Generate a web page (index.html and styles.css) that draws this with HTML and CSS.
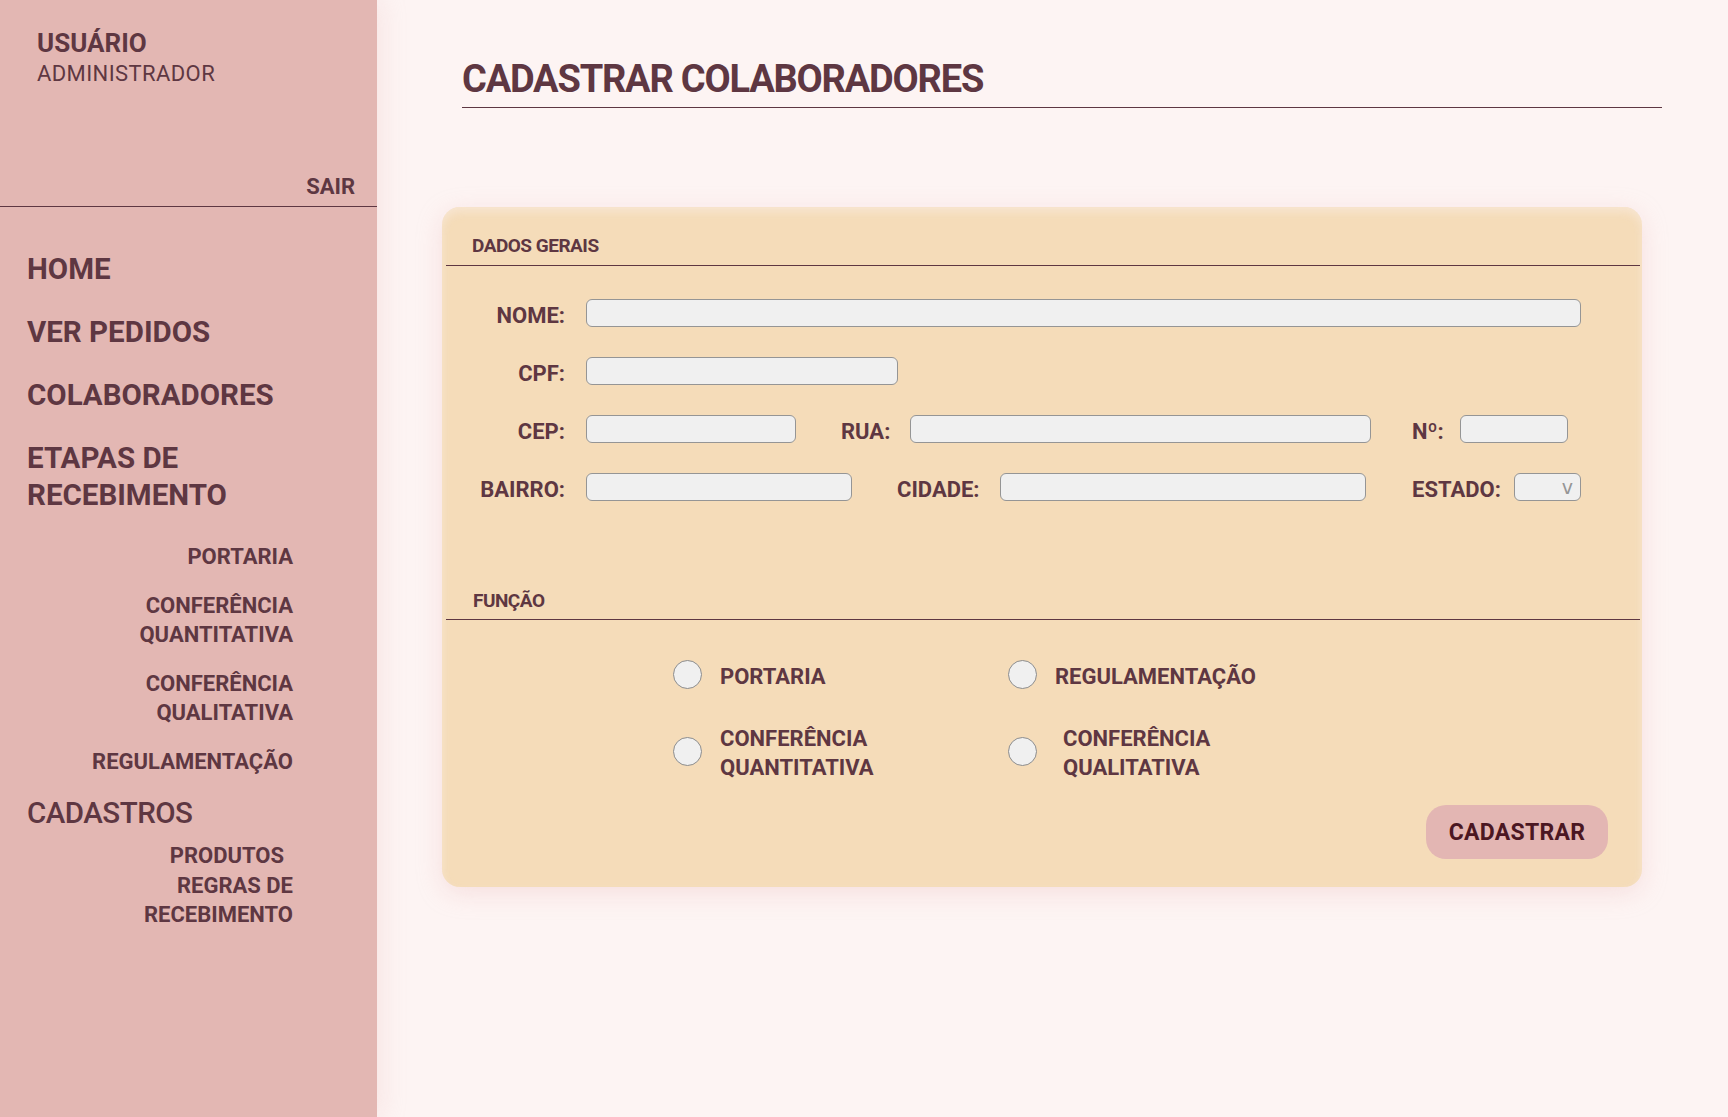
FILE: index.html
```html
<!DOCTYPE html>
<html lang="pt-BR">
<head>
<meta charset="utf-8">
<title>Cadastrar Colaboradores</title>
<link rel="stylesheet" href="styles.css">
</head>
<body>
<div class="app">
  <aside class="sidebar">
    <div class="user">
      <div class="user-name">USUÁRIO</div>
      <div class="user-role">ADMINISTRADOR</div>
      <a class="logout">SAIR</a>
    </div>
    <nav class="menu">
      <a class="menu-item">HOME</a>
      <a class="menu-item">VER PEDIDOS</a>
      <a class="menu-item">COLABORADORES</a>
      <a class="menu-item">ETAPAS DE<br>RECEBIMENTO</a>
    </nav>
    <div class="submenu">
      <a class="sub-item">PORTARIA</a>
      <a class="sub-item">CONFERÊNCIA<br>QUANTITATIVA</a>
      <a class="sub-item">CONFERÊNCIA<br>QUALITATIVA</a>
      <a class="sub-item">REGULAMENTAÇÃO</a>
    </div>
    <div class="menu-title">CADASTROS</div>
    <div class="submenu-cad">
      <a class="sub-item sub-produtos">PRODUTOS</a>
      <a class="sub-item">REGRAS DE<br>RECEBIMENTO</a>
    </div>
  </aside>

  <main class="main">
    <header class="page-head">
      <h1 class="page-title">CADASTRAR COLABORADORES</h1>
    </header>

    <section class="card">
      <div class="section-title">DADOS GERAIS</div>

      <div class="form">
        <div class="row">
          <label class="lbl">NOME:</label>
          <input class="field w-nome" type="text">
        </div>
        <div class="row">
          <label class="lbl">CPF:</label>
          <input class="field w-cpf" type="text">
        </div>
        <div class="row">
          <label class="lbl">CEP:</label>
          <input class="field w-cep" type="text">
          <label class="lbl-inline l-rua">RUA:</label>
          <input class="field w-rua" type="text">
          <label class="lbl-inline l-num">Nº:</label>
          <input class="field w-num" type="text">
        </div>
        <div class="row">
          <label class="lbl">BAIRRO:</label>
          <input class="field w-bairro" type="text">
          <label class="lbl-inline l-cidade">CIDADE:</label>
          <input class="field w-cidade" type="text">
          <label class="lbl-inline l-estado">ESTADO:</label>
          <div class="field select"><span class="select-arrow">v</span></div>
        </div>
      </div>

      <div class="section-title section-funcao">FUNÇÃO</div>

      <div class="radios">
        <label class="radio-opt"><input type="radio" name="funcao" class="radio"><span class="radio-text">PORTARIA</span></label>
        <label class="radio-opt"><input type="radio" name="funcao" class="radio"><span class="radio-text">REGULAMENTAÇÃO</span></label>
        <label class="radio-opt"><input type="radio" name="funcao" class="radio"><span class="radio-text">CONFERÊNCIA<br>QUANTITATIVA</span></label>
        <label class="radio-opt"><input type="radio" name="funcao" class="radio"><span class="radio-text shift">CONFERÊNCIA<br>QUALITATIVA</span></label>
      </div>

      <div class="actions">
        <button class="btn" type="button">CADASTRAR</button>
      </div>
    </section>
  </main>
</div>
</body>
</html>
```

FILE: styles.css
```css
* { box-sizing: border-box; }

html, body {
  margin: 0;
  padding: 0;
}

body {
  background: #fdf4f3;
  color: #5e3742;
  font-family: Roboto, "Liberation Sans", Arial, sans-serif;
  overflow: hidden;
}

a { color: inherit; text-decoration: none; }

.app {
  display: flex;
  min-height: 1117px;
}

/* ---------- Sidebar ---------- */
.sidebar {
  width: 377px;
  flex-shrink: 0;
  background: #e3b7b3;
  box-shadow: 6px 0 22px rgba(232, 180, 180, 0.22);
  position: relative;
  z-index: 1;
}

.user {
  padding: 27px 22px 6px 37px;
  border-bottom: 1px solid #5e3742;
}

.user-name {
  font-size: 26px;
  font-weight: 700;
  line-height: 32px;
}

.user-role {
  font-size: 22px;
  font-weight: 400;
  line-height: 30px;
  letter-spacing: 0.4px;
}

.logout {
  display: block;
  text-align: right;
  font-size: 22px;
  font-weight: 700;
  line-height: 26px;
  margin-top: 85px;
}

.menu {
  display: flex;
  flex-direction: column;
  gap: 26px;
  padding: 44px 0 0 27px;
}

.menu-item,
.menu-title {
  font-size: 29.5px;
  font-weight: 700;
  line-height: 37px;
}

.menu-title {
  font-weight: 500;
  letter-spacing: -0.5px;
  padding-left: 27px;
  margin-top: 19px;
}

.submenu,
.submenu-cad {
  display: flex;
  flex-direction: column;
  align-items: flex-end;
  text-align: right;
  padding-right: 84px;
}

.submenu {
  gap: 20px;
  margin-top: 28px;
}

.submenu-cad {
  margin-top: 9px;
}

.sub-item {
  font-size: 22px;
  font-weight: 700;
  line-height: 29px;
}

.submenu-cad .sub-item {
  line-height: 29.5px;
}

.sub-produtos {
  padding-right: 9px;
}

/* ---------- Main ---------- */
.main {
  flex: 1;
  padding: 0 66px 0 65px;
}

.page-head {
  margin-left: 20px;
  padding: 55px 0 4px;
  border-bottom: 1px solid #5e3742;
}

.page-title {
  margin: 0;
  font-family: Roboto, sans-serif;
  font-size: 38px;
  font-weight: 700;
  letter-spacing: -1.2px;
  line-height: 48px;
  color: #5e3742;
}

.card {
  margin-top: 99px;
  width: 1200px;
  background: #f5dcb9;
  border-radius: 18px;
  padding: 27px 2px 28px 4px;
  box-shadow: 0 6px 24px rgba(236, 186, 186, 0.35), inset 0 5px 8px rgba(250, 236, 228, 0.55);
}

.section-title {
  font-family: Roboto, sans-serif;
  font-size: 19px;
  font-weight: 700;
  letter-spacing: -0.5px;
  line-height: 24px;
  padding: 0 0 7px 26px;
  border-bottom: 1px solid #5e3742;
}

.section-funcao {
  margin-top: 82px;
  padding-bottom: 6px;
  padding-left: 27px;
}

/* form */
.form {
  margin-top: 33px;
  display: flex;
  flex-direction: column;
  gap: 24px;
}

.row {
  display: flex;
  align-items: flex-start;
  height: 34px;
}

.lbl,
.lbl-inline {
  font-size: 22px;
  font-weight: 700;
  line-height: 34px;
  white-space: nowrap;
}

.lbl {
  width: 119px;
  text-align: right;
  margin-right: 21px;
}

.l-rua { width: 69px; margin-left: 45px; }
.l-num { width: 48px; margin-left: 41px; }
.l-cidade { width: 103px; margin-left: 45px; }
.l-estado { width: 102px; margin-left: 46px; }

.field {
  height: 28px;
  margin: 0;
  padding: 0 8px;
  background: #f0f0f0;
  border: 1px solid #959595;
  border-radius: 6px;
  font-family: Roboto, sans-serif;
  font-size: 16px;
  color: #333;
  outline: none;
}

.w-nome { width: 995px; }
.w-cpf { width: 312px; }
.w-cep { width: 210px; }
.w-rua { width: 461px; }
.w-num { width: 108px; }
.w-bairro { width: 266px; }
.w-cidade { width: 366px; }

.select {
  width: 67px;
  display: flex;
  align-items: center;
  justify-content: flex-end;
  padding-right: 7px;
}

.select-arrow {
  font-family: "DejaVu Sans", sans-serif;
  font-size: 19px;
  font-weight: 400;
  color: #959595;
  line-height: 1;
  margin-top: 1px;
}

/* radios */
.radios {
  margin: 38.5px 0 0 227px;
  display: grid;
  grid-template-columns: 335px 335px;
  row-gap: 30.5px;
}

.radio-opt {
  display: flex;
  align-items: center;
  gap: 18px;
}

.radio {
  -webkit-appearance: none;
  appearance: none;
  width: 29px;
  height: 29px;
  margin: 0;
  border-radius: 50%;
  background: #f0f0f0;
  border: 1px solid #8c8c8c;
  flex-shrink: 0;
}

.radio-text {
  font-size: 22px;
  font-weight: 700;
  line-height: 29px;
  padding-top: 3px;
  white-space: nowrap;
}

.radio-text.shift {
  margin-left: 8px;
}

/* button */
.actions {
  display: flex;
  justify-content: flex-end;
  margin-top: 23px;
  padding-right: 32px;
}

.btn {
  width: 182px;
  height: 54px;
  border: none;
  border-radius: 20px;
  background: #e3b6b3;
  color: #4b1722;
  font-family: Roboto, sans-serif;
  font-size: 23px;
  font-weight: 700;
  letter-spacing: 0.3px;
  cursor: pointer;
}
```
